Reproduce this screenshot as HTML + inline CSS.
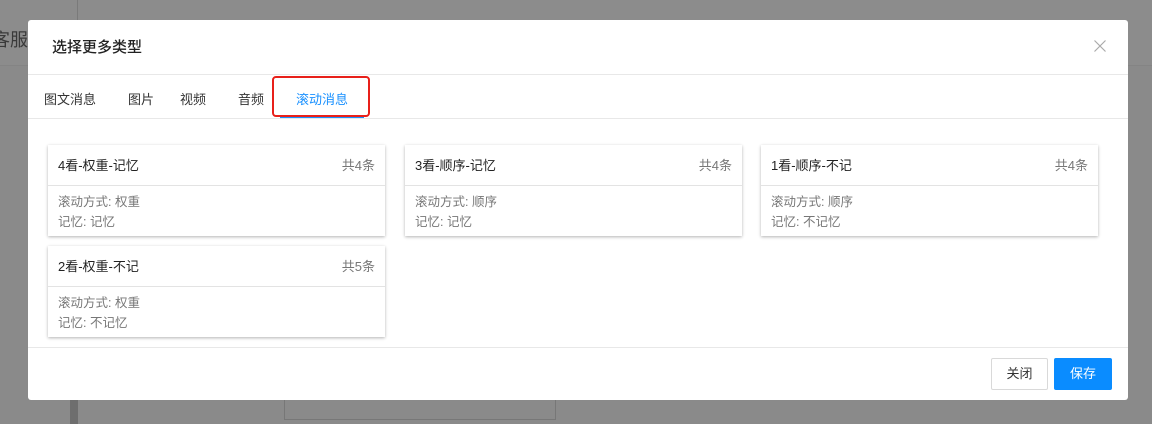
<!DOCTYPE html>
<html><head><meta charset="utf-8"><style>
*{box-sizing:border-box;margin:0;padding:0}
body{width:1152px;height:424px;overflow:hidden;background:#8a8a8a;font-family:"Liberation Sans","Noto Sans CJK SC",sans-serif;position:relative}
.bg1{position:absolute;left:0;top:0;width:1152px;height:66px;background:#8c8c8c;border-bottom:1px solid #848484}
.kf{position:absolute;left:-8px;top:26px;font-size:18px;color:#3a3a3a}
.vl{position:absolute;left:77px;top:0;width:1px;height:66px;background:#7a7a7a}
.lb{position:absolute;left:70px;top:400px;width:8px;height:24px;background:#6e6e6e}
.bx{position:absolute;left:284px;top:400px;width:272px;height:20px;border:1px solid #777;border-top:none}
.modal{position:absolute;left:28px;top:20px;width:1100px;height:380px;background:#fff;border-radius:3px}
.title{position:absolute;left:24px;top:16px;font-size:15px;color:#222;font-weight:500}
.close{position:absolute;right:22px;top:20px;width:12px;height:12px}
.hl{position:absolute;left:0;width:1100px;height:1px;background:#e8e8e8}
.tab{position:absolute;top:69px;font-size:13px;color:#333}
.act{color:#1890ff}
.ul{position:absolute;left:252px;top:96px;width:84px;height:2px;background:#1890ff}
.red{position:absolute;left:244px;top:56px;width:98px;height:41px;border:2px solid #e8201a;border-radius:4px}
.card{position:absolute;width:337px;height:91px;background:#fff;box-shadow:0 1px 3px rgba(0,0,0,.3)}
.ch{height:41px;border-bottom:1px solid #e3e3e3;padding:10px 10px 0 10px;font-size:13px;color:#222;display:flex;justify-content:space-between}
.ch span{color:#777}
.cb{padding:6px 10px;font-size:12.5px;color:#777;line-height:20px}
.btn{position:absolute;top:338px;height:32px;font-size:13px;text-align:center;line-height:30px;border-radius:2px}
</style></head><body>
<div class="bg1"></div><div class="kf">客服</div><div class="vl"></div>
<div class="lb"></div><div class="bx"></div>
<div class="modal">
<div class="title">选择更多类型</div>
<svg class="close" viewBox="0 0 12 12"><path d="M0.5 0.5L11.5 11.5M11.5 0.5L0.5 11.5" stroke="#aaa" stroke-width="1.2"/></svg>
<div class="hl" style="top:54px"></div>
<div class="tab" style="left:16px">图文消息</div>
<div class="tab" style="left:100px">图片</div>
<div class="tab" style="left:152px">视频</div>
<div class="tab" style="left:210px">音频</div>
<div class="tab act" style="left:268px">滚动消息</div>
<div class="ul"></div>
<div class="red"></div>
<div class="hl" style="top:98px"></div>
<div class="card" style="left:20px;top:125px"><div class="ch">4看-权重-记忆<span>共4条</span></div><div class="cb">滚动方式: 权重<br>记忆: 记忆</div></div>
<div class="card" style="left:377px;top:125px"><div class="ch">3看-顺序-记忆<span>共4条</span></div><div class="cb">滚动方式: 顺序<br>记忆: 记忆</div></div>
<div class="card" style="left:733px;top:125px"><div class="ch">1看-顺序-不记<span>共4条</span></div><div class="cb">滚动方式: 顺序<br>记忆: 不记忆</div></div>
<div class="card" style="left:20px;top:226px"><div class="ch">2看-权重-不记<span>共5条</span></div><div class="cb">滚动方式: 权重<br>记忆: 不记忆</div></div>
<div class="hl" style="top:327px"></div>
<div class="btn" style="left:963px;width:57px;border:1px solid #d9d9d9;color:#333">关闭</div>
<div class="btn" style="left:1026px;width:58px;background:#0a8cff;color:#fff;line-height:32px">保存</div>
</div>
</body></html>
